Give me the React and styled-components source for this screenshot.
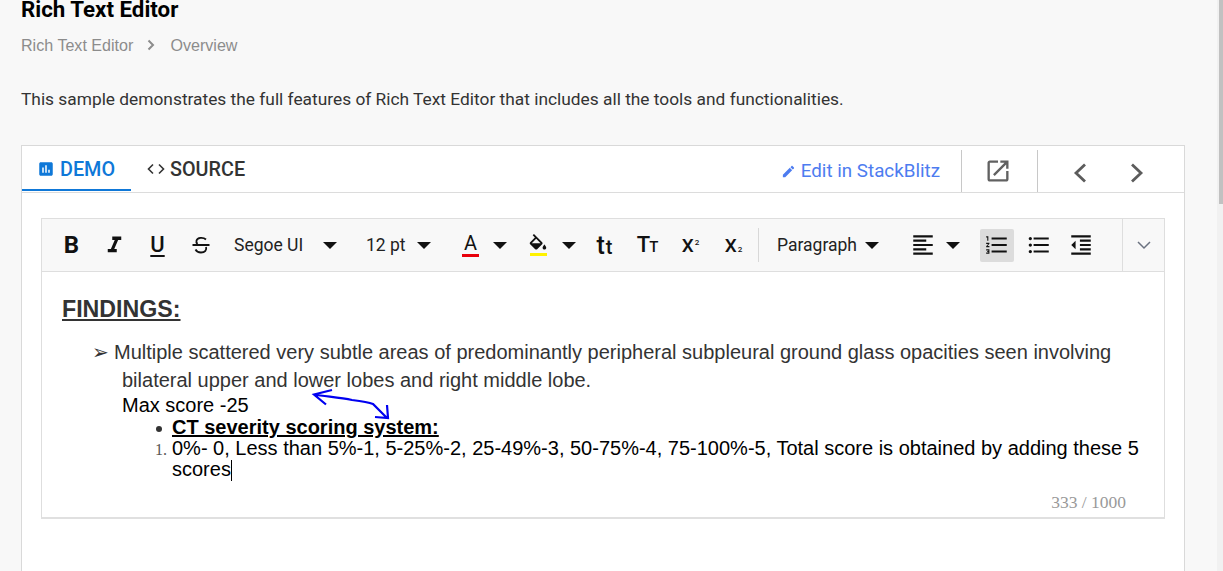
import React from "react";
import styled, { createGlobalStyle } from "styled-components";

const Global = createGlobalStyle`
  html, body { margin: 0; padding: 0; height: 100%; overflow: hidden; background: #f8f8f8; }
  #root { height: 100%; }
  * { box-sizing: border-box; }
`;

const Page = styled.div`
  display: flex;
  height: 571px;
  overflow: hidden;
  font-family: Roboto, sans-serif;
`;
const Main = styled.main`
  flex: 1;
  min-width: 0;
  padding: 0 32px 0 21px;
  display: flex;
  flex-direction: column;
`;
const ScrollTrack = styled.div`
  width: 6px;
  background: #f1f1f1;
  padding-left: 2px;
`;
const ScrollThumb = styled.div`
  height: 204px;
  background: #c1c1c1;
`;
const Title = styled.h1`
  margin: -5px 0 0;
  font-size: 22.300px;
  line-height: 28px;
  font-weight: 700;
  color: #000;
`;
const Crumbs = styled.nav`
  display: flex;
  align-items: center;
  margin-top: 12px;
  height: 20px;
  font-family: "Liberation Sans", Arial, sans-serif;
  font-size: 16.100px;
  color: #8c8c8c;
`;
const CrumbSep = styled.svg`
  width: 10px;
  height: 12px;
  margin: 0 14px 0 13px;
  fill: none;
  stroke: #8c8c8c;
  stroke-width: 2;
`;
const Lead = styled.p`
  margin: 34px 0 0;
  font-size: 17.330px;
  line-height: 20px;
  color: #333;
`;
const Card = styled.section`
  flex: 1;
  margin-top: 36px;
  margin-bottom: -20px;
  background: #fff;
  border: 1px solid #d9d9d9;
`;
const TabBar = styled.div`
  display: flex;
  align-items: stretch;
  height: 47px;
  border-bottom: 1px solid #dcdcdc;
`;
const Tab = styled.div`
  display: flex;
  align-items: center;
  gap: 5px;
  height: 45px;
  padding: 3px 0 0 ${p => p.$pl}px;
  width: ${p => p.$w}px;
  font-size: 19.800px;
  font-weight: 500;
  color: ${p => (p.$active ? "#0f78d8" : "#333")};
  border-bottom: ${p => (p.$active ? "2px solid #0f78d8" : "2px solid transparent")};
`;
const TabActions = styled.div`
  margin-left: auto;
  display: flex;
  align-items: stretch;
  height: 42px;
  margin-top: 4px;
`;
const EditLink = styled.a`
  display: flex;
  align-items: center;
  gap: 5px;
  padding: 0 21px 0 0;
  font-size: 18.800px;
  color: #4d7cf0;
  border-right: 1px solid #c8c8c8;
`;
const ActionBox = styled.div`
  display: flex;
  align-items: center;
  justify-content: center;
  gap: ${p => p.$gap || 0}px;
  width: ${p => p.$w}px;
  padding-right: ${p => p.$pr || 0}px;
  padding-top: ${p => p.$pt || 0}px;
  border-right: ${p => (p.$divided ? "1px solid #c8c8c8" : "0")};
`;
const Body = styled.div`
  padding: 25px 19px 0 19px;
`;
const Editor = styled.div`
  border: 1px solid #dedede;
  border-bottom: 2px solid #e0e0e0;
  height: 301px;
  display: flex;
  flex-direction: column;
`;
const Toolbar = styled.div`
  display: flex;
  align-items: stretch;
  height: 53px;
  background: #f8f8f8;
  border-bottom: 1px solid #dedede;
  flex: none;
`;
const Tools = styled.div`
  flex: 1;
  display: flex;
  align-items: center;
  padding-left: 8px;
`;
const Tool = styled.div`
  flex: none;
  display: flex;
  align-items: center;
  justify-content: center;
  position: relative;
  width: ${p => p.$w || 43}px;
  height: 33px;
  border-radius: 2px;
  color: #111;
  background: ${p => (p.$active ? "#dcdcdc" : "transparent")};
`;
const Glyph = styled.span`
  font-family: Roboto, sans-serif;
  font-size: ${p => p.$size || 22}px;
  font-weight: ${p => p.$weight || 500};
  line-height: 1;
  color: #111;
  text-decoration: ${p => (p.$under ? "underline" : "none")};
  text-decoration-thickness: 2px;
  text-underline-offset: 3px;
  margin-left: ${p => p.$ml || 0}px;
`;
const Sup = styled.span`
  font-size: 8px;
  line-height: 0;
  vertical-align: ${p => p.$lift}px;
  margin-left: 1px;
`;
const Label = styled.span`
  flex: none;
  font-size: 17.500px;
  color: #222;
  width: ${p => p.$w}px;
  margin-left: ${p => p.$ml || 0}px;
`;
const Caret = styled.i`
  flex: none;
  display: block;
  width: 0;
  height: 0;
  margin-left: ${p => p.$ml || 0}px;
  margin-right: ${p => p.$mr || 0}px;
  border-left: 7px solid transparent;
  border-right: 7px solid transparent;
  border-top: 7px solid #111;
`;
const ColorA = styled.div`
  flex: none;
  display: flex;
  flex-direction: column;
  align-items: center;
  width: ${p => p.$w}px;
  margin-left: ${p => p.$ml || 0}px;
  padding-top: ${p => p.$pt || 0}px;
`;
const Swatch = styled.div`
  width: 17px;
  height: 3px;
  margin-top: ${p => p.$mt || 0}px;
  background: ${p => p.$c};
`;
const VSep = styled.div`
  flex: none;
  width: 1px;
  height: 34px;
  margin: 0 18px 0 3px;
  background: #d8d8d8;
`;
const Expander = styled.div`
  flex: none;
  width: 42px;
  border-left: 1px solid #dedede;
  display: flex;
  align-items: center;
  justify-content: center;
`;
const Content = styled.div`
  position: relative;
  flex: 1;
  background: #fff;
  padding: 23px 20px 0;
  font-family: "Liberation Sans", Arial, sans-serif;
  font-size: 20px;
  color: #000;
`;
const Heading = styled.div`
  font-size: 23.200px;
  line-height: 28px;
  font-weight: 700;
  color: #333;
  text-decoration: underline;
`;
const Finding = styled.p`
  margin: 15px 0 0;
  padding-left: 60px;
  text-indent: -30px;
  line-height: 28px;
  color: #333;
`;
const Arrowhead = styled.span`
  display: inline-block;
  width: 22px;
  line-height: 1;
  text-indent: 0;
  font-family: "DejaVu Sans", sans-serif;
  font-size: 20px;
`;
const Plain = styled.div`
  padding-left: 60px;
  line-height: 23px;
`;
const Items = styled.div`
  padding-left: 110px;
  line-height: 21px;
`;
const Item = styled.div`
  position: relative;
`;
const Bullet = styled.span`
  position: absolute;
  left: -16px;
  top: 9px;
  width: 6px;
  height: 6px;
  border-radius: 50%;
  background: #333;
`;
const Num = styled.span`
  position: absolute;
  left: -17px;
  top: 1px;
  font-family: "Liberation Serif", serif;
  font-size: 16px;
  color: #555;
`;
const Strong = styled.b`
  text-decoration: underline;
`;
const Cursor = styled.span`
  display: inline-block;
  width: 1px;
  height: 21px;
  margin-bottom: -5px;
  background: #000;
`;
const Counter = styled.div`
  position: absolute;
  right: 38px;
  bottom: 4px;
  font-family: "Liberation Serif", serif;
  font-size: 17.500px;
  color: #999;
`;
const Scribble = styled.svg`
  position: absolute;
  left: 0;
  top: 0;
  width: 400px;
  height: 160px;
  fill: none;
  stroke: #0000f0;
  stroke-width: 2.200;
  pointer-events: none;
`;
const Icon = styled.svg`
  flex: none;
  display: block;
  width: ${p => p.$s || 24}px;
  height: ${p => p.$s || 24}px;
  fill: ${p => p.$c || "#111"};
  margin-bottom: ${p => p.$mb || 0}px;
`;
const Line = styled.svg`
  flex: none;
  display: block;
  width: ${p => p.$w}px;
  height: ${p => p.$h}px;
  fill: none;
  stroke: ${p => p.$c || "#111"};
  stroke-width: ${p => p.$sw || 2};
`;

const P = ({ d, s, c, mb }) => (
  <Icon viewBox="0 0 24 24" $s={s} $c={c} $mb={mb}><path d={d} /></Icon>
);

export default function App() {
  return (
    <Page>
      <Global />
      <Main>
        <Title>Rich Text Editor</Title>
        <Crumbs>
          Rich Text Editor
          <CrumbSep viewBox="0 0 10 12"><path d="M2.500 1.500 7 6l-4.500 4.500" /></CrumbSep>
          Overview
        </Crumbs>
        <Lead>This sample demonstrates the full features of Rich Text Editor that includes all the tools and functionalities.</Lead>
        <Card>
          <TabBar>
            <Tab $active $w={109} $pl={15}>
              <P s={18} c="#0f78d8" d="M19 3H5c-1.100 0-2 .9-2 2v14c0 1.100.9 2 2 2h14c1.100 0 2-.9 2-2V5c0-1.100-.9-2-2-2zM9 17H7v-7h2v7zm4 0h-2V7h2v10zm4 0h-2v-4h2v4z" />
              DEMO
            </Tab>
            <Tab $w={125} $pl={16}>
              <Line viewBox="0 0 18 12" $w={18} $h={12} $c="#333" $sw={1.600}><path d="M6 1.500 1.500 6 6 10.500M12 1.500 16.500 6 12 10.500" /></Line>
              SOURCE
            </Tab>
            <TabActions>
              <EditLink>
                <P s={15} c="#4d7cf0" d="M3 17.250V21h3.750L17.810 9.940l-3.750-3.750L3 17.250zM20.710 7.040c.39-.39.39-1.020 0-1.410l-2.340-2.340c-.39-.39-1.020-.39-1.410 0l-1.830 1.830 3.750 3.750 1.830-1.830z" />
                Edit in StackBlitz
              </EditLink>
              <ActionBox $w={76} $pr={4} $divided>
                <P s={28} c="#616161" d="M19 19H5V5h7V3H5c-1.110 0-2 .9-2 2v14c0 1.100.89 2 2 2h14c1.100 0 2-.9 2-2v-7h-2v7zM14 3v2h3.590l-9.830 9.830 1.410 1.410L19 6.410V10h2V3h-7z" />
              </ActionBox>
              <ActionBox $w={146} $gap={43} $pr={6} $pt={3}>
                <Line viewBox="0 0 14 20" $w={14} $h={20} $c="#5c5c5c" $sw={2.800}><path d="M12 1.500 3 10l9 8.500" /></Line>
                <Line viewBox="0 0 14 20" $w={14} $h={20} $c="#5c5c5c" $sw={2.800}><path d="M2 1.500 11 10l-9 8.500" /></Line>
              </ActionBox>
            </TabActions>
          </TabBar>
          <Body>
            <Editor>
              <Toolbar>
                <Tools>
                  <Tool><Glyph $size={24} $weight={700}>B</Glyph></Tool>
                  <Tool><P s={27} d="M10 4v3h2.210l-3.420 8H6v3h8v-3h-2.210l3.420-8H18V4z" /></Tool>
                  <Tool><Glyph $size={22} $weight={500} $under>U</Glyph></Tool>
                  <Tool>
                    <Line viewBox="0 0 20 20" $w={20} $h={20} $sw={1.800}>
                      <path d="M1.500 10H18.500M15 4.500C12 1.800 6.500 2.500 5.500 5.500 5 7 5.500 8 6.500 9M15 12c1 3-1 5.500-5 5.500-2.500 0-4.500-1-5.500-3" />
                    </Line>
                  </Tool>
                  <Label $w={89} $ml={12}>Segoe UI</Label>
                  <Caret $mr={29} />
                  <Label $w={51}>12 pt</Label>
                  <Caret $mr={31} />
                  <ColorA $w={17}>
                    <Glyph $size={20} $weight={400}>A</Glyph>
                    <Swatch $c="#e8000b" $mt={1} />
                  </ColorA>
                  <Caret $ml={14} $mr={21} />
                  <ColorA $w={20}>
                    <P s={22} mb={-3} d="M16.560 8.940L7.620 0 6.210 1.410l2.380 2.380-5.150 5.150c-.59.59-.59 1.540 0 2.120l5.500 5.500c.29.29.68.44 1.060.44s.77-.15 1.060-.44l5.500-5.500c.59-.58.59-1.530 0-2.120zM5.210 10L10 5.210 14.790 10H5.210zM19 11.500s-2 2.170-2 3.500c0 1.100.9 2 2 2s2-.9 2-2c0-1.330-2-3.500-2-3.500z" />
                    <Swatch $c="#fff200" />
                  </ColorA>
                  <Caret $ml={14} $mr={7} />
                  <Tool $w={43}><Glyph $size={25}>t<Glyph $size={20} $ml={1}>t</Glyph></Glyph></Tool>
                  <Tool $w={43}><Glyph $size={22}>T<Glyph $size={15} $ml={-1}>T</Glyph></Glyph></Tool>
                  <Tool $w={43}><Glyph $size={19} $weight={500}>X<Sup $lift={7}>2</Sup></Glyph></Tool>
                  <Tool $w={43}><Glyph $size={19} $weight={500}>X<Sup $lift={0}>2</Sup></Glyph></Tool>
                  <VSep />
                  <Label $w={88}>Paragraph</Label>
                  <Caret $mr={31} />
                  <P s={26} d="M15 15H3v2h12v-2zm0-8H3v2h12V7zM3 13h18v-2H3v2zm0 8h18v-2H3v2zM3 3v2h18V3H3z" />
                  <Caret $ml={10} $mr={20} />
                  <Tool $w={34} $active><P s={26} d="M2 17h2v.5H3v1h1v.5H2v1h3v-4H2v1zm1-9h1V4H2v1h1v3zm-1 3h1.800L2 13.100v.9h3v-1H3.200L5 10.900V10H2v1zm5-6v2h14V5H7zm0 14h14v-2H7v2zm0-6h14v-2H7v2z" /></Tool>
                  <Tool $w={50}><P s={26} d="M4 10.500c-.83 0-1.500.67-1.500 1.500s.67 1.500 1.500 1.500 1.500-.67 1.500-1.500-.67-1.500-1.500-1.500zm0-6c-.83 0-1.500.67-1.500 1.500S3.170 7.500 4 7.500 5.500 6.830 5.500 6 4.830 4.500 4 4.500zm0 12c-.83 0-1.500.68-1.500 1.500s.68 1.500 1.500 1.500 1.500-.68 1.500-1.500-.67-1.500-1.500-1.500zM7 19h14v-2H7v2zm0-6h14v-2H7v2zm0-8v2h14V5H7z" /></Tool>
                  <Tool $w={34}><P s={26} d="M11 17h10v-2H11v2zm-8-5l4 4V8l-4 4zm0 9h18v-2H3v2zM3 3v2h18V3H3zm8 6h10V7H11v2zm0 4h10v-2H11v2z" /></Tool>
                </Tools>
                <Expander>
                  <Line viewBox="0 0 16 10" $w={16} $h={10} $c="#6b7280" $sw={1.500}><path d="M2 2l6 6 6-6" /></Line>
                </Expander>
              </Toolbar>
              <Content>
                <Heading>FINDINGS:</Heading>
                <Finding>
                  <Arrowhead>➢</Arrowhead>Multiple scattered very subtle areas of predominantly peripheral subpleural ground glass opacities seen involving bilateral upper and lower lobes and right middle lobe.
                </Finding>
                <Plain>Max score -25</Plain>
                <Items>
                  <Item><Bullet /><Strong>CT severity scoring system:</Strong></Item>
                  <Item><Num>1.</Num>0%- 0, Less than 5%-1, 5-25%-2, 25-49%-3, 50-75%-4, 75-100%-5, Total score is obtained by adding these 5 scores<Cursor /></Item>
                </Items>
                <Counter>333 / 1000</Counter>
                <Scribble viewBox="0 0 400 160">
                  <path d="M290 118l-18 4.500 12 10M272 122.500c12 2 26 3 38 5.500 8 1 16 2 21 4l14 14M333 145l13 1-1-13" />
                </Scribble>
              </Content>
            </Editor>
          </Body>
        </Card>
      </Main>
      <ScrollTrack><ScrollThumb /></ScrollTrack>
    </Page>
  );
}
